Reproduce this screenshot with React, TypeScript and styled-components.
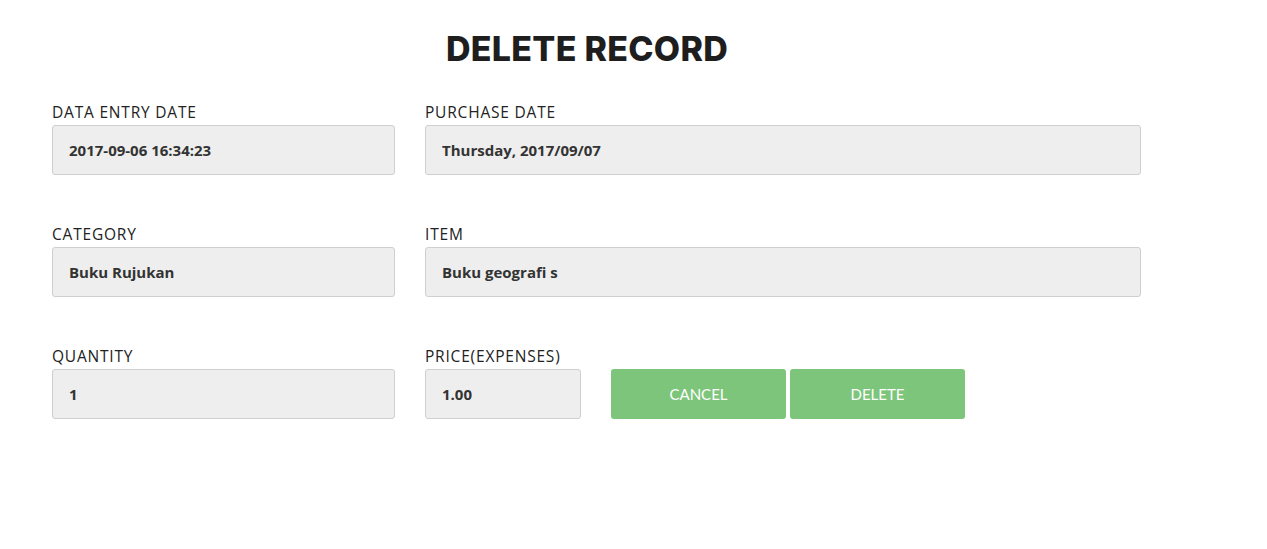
import styled, { createGlobalStyle } from 'styled-components';

const GlobalStyle = createGlobalStyle`
  html, body {
    margin: 0;
    padding: 0;
    background: #fff;
  }
  body {
    font-family: "Open Sans", "Liberation Sans", sans-serif;
  }
  * { box-sizing: border-box; }
`;

type Field = { label: string; value: string; size: 'short' | 'wide' | 'small' };

const rows: Field[][] = [
  [
    { label: 'Data Entry Date', value: '2017-09-06 16:34:23', size: 'short' },
    { label: 'Purchase Date', value: 'Thursday, 2017/09/07', size: 'wide' },
  ],
  [
    { label: 'Category', value: 'Buku Rujukan', size: 'short' },
    { label: 'Item', value: 'Buku geografi s', size: 'wide' },
  ],
];

const widths = { short: 343, wide: 716, small: 156 };

export default function App() {
  return (
    <>
      <GlobalStyle />
      <Page>
        <Title>DELETE RECORD</Title>
        <Form>
          {rows.map((row, i) => (
            <Row key={i}>
              {row.map((f) => (
                <Group key={f.label}>
                  <Label>{f.label}</Label>
                  <Input $w={widths[f.size]} value={f.value} readOnly />
                </Group>
              ))}
            </Row>
          ))}
          <Row>
            <Group>
              <Label>Quantity</Label>
              <Input $w={widths.short} value="1" readOnly />
            </Group>
            <Group>
              <Label>Price(Expenses)</Label>
              <Input $w={widths.small} value="1.00" readOnly />
            </Group>
            <Buttons>
              <Button type="button">CANCEL</Button>
              <Button type="button">DELETE</Button>
            </Buttons>
          </Row>
        </Form>
      </Page>
    </>
  );
}

const Page = styled.div`
  width: 1267px;
  height: 549px;
  padding: 29px 0 0 52px;
`;

const Title = styled.h1`
  width: 1070px;
  margin: 0 0 34px;
  text-align: center;
  font-family: Inter, "Open Sans", sans-serif;
  font-weight: 800;
  font-size: 34px;
  letter-spacing: 0.3px;
  color: #1e1e1e;
  line-height: 40px;
`;

const Form = styled.div`
  display: flex;
  flex-direction: column;
  gap: 50px;
`;

const Row = styled.div`
  display: flex;
  align-items: flex-end;
  gap: 30px;
`;

const Group = styled.div`
  display: flex;
  flex-direction: column;
  gap: 4px;
`;

const Label = styled.label`
  font-family: "Open Sans", sans-serif;
  font-size: 15.5px;
  letter-spacing: 0.8px;
  text-transform: uppercase;
  color: #222;
  line-height: 18px;
`;

const Input = styled.input<{ $w: number }>`
  width: ${({ $w }) => $w}px;
  height: 50px;
  padding: 0 16px;
  background: #eeeeee;
  border: 1px solid #cfcfcf;
  border-radius: 3px;
  font-family: "Open Sans", sans-serif;
  font-weight: 700;
  font-size: 15px;
  color: #333;
  outline: none;
`;

const Buttons = styled.div`
  display: flex;
  gap: 4px;
`;

const Button = styled.button`
  width: 175px;
  height: 50px;
  background: #7dc57a;
  border: none;
  border-radius: 3px;
  color: #fff;
  font-family: Lato, sans-serif;
  font-size: 15px;
  cursor: pointer;
`;
